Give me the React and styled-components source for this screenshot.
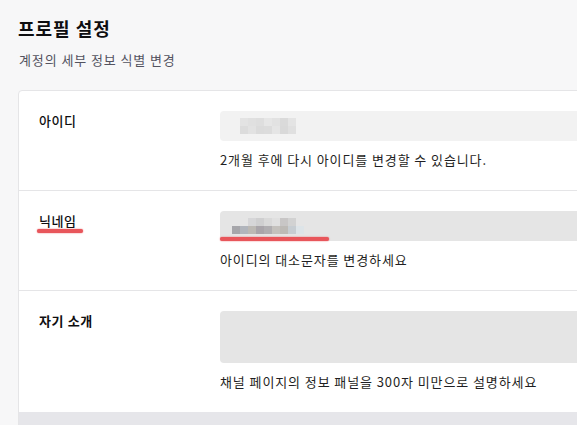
import React from 'react';
import styled, { createGlobalStyle } from 'styled-components';

const GlobalStyle = createGlobalStyle`
  html, body {
    margin: 0;
    padding: 0;
    background: #f7f7f8;
    overflow: hidden;
  }
  body {
    font-family: "Noto Sans CJK KR", "Noto Sans", sans-serif;
    color: #1f1f23;
  }
`;

const Page = styled.div`
  width: 680px;
  padding: 16px 0 0 18px;
  box-sizing: border-box;
`;

const Title = styled.h1`
  margin: 0;
  font-size: 18px;
  line-height: 24px;
  font-weight: 700;
  letter-spacing: 1px;
  color: #0e0e10;
`;

const Subtitle = styled.p`
  margin: 10px 0 20px 1px;
  font-size: 13px;
  line-height: 20px;
  letter-spacing: 0.9px;
  color: #53535f;
`;

const Card = styled.section`
  background: #fff;
  border: 1px solid #e5e5e7;
  border-radius: 4px;
  overflow: hidden;
`;

const Row = styled.div`
  display: grid;
  grid-template-columns: 181px 1fr;
  padding: 20px 0 20px 20px;
  border-top: ${p => (p.$first ? 'none' : '1px solid #e5e5e7')};
`;

const Label = styled.div`
  position: relative;
  align-self: start;
  font-size: 13px;
  line-height: 20px;
  letter-spacing: 0.6px;
  font-weight: ${p => p.$weight || 700};
  color: #0e0e10;
`;

const Field = styled.div`
  display: flex;
  flex-direction: column;
  gap: 9px;
`;

const InputBox = styled.div`
  position: relative;
  height: ${p => p.$h}px;
  background: ${p => p.$bg};
  border-radius: 4px;
  display: flex;
  align-items: center;
  padding-left: 12px;
`;

const Hint = styled.div`
  font-size: 13px;
  line-height: 20px;
  letter-spacing: 0.9px;
  color: #1f1f23;
`;

const Mosaic = styled.div`
  display: grid;
  grid-template-columns: repeat(9, 8px);
  grid-auto-rows: 8px;
  filter: blur(0.4px);
`;

const Cell = styled.div`
  background: ${p => p.$c};
`;

const Mark = styled.span`
  position: absolute;
  height: 4px;
  border-radius: 3px;
  background: #e8565b;
  box-shadow: 0 0 1.5px #e8565b;
  left: ${p => p.$left}px;
  top: ${p => p.$top}px;
  width: ${p => p.$w}px;
`;

const Footer = styled.div`
  height: 16px;
  background: #e6e6ea;
`;

const idCells = [
  '#f2f2f2', '#e3e3e3', '#e0e0e0', '#dedede', '#e6e6e6', '#e2e2e2', '#dadada', '#e4e4e4', '#f2f2f2',
  '#f2f2f2', '#dcdcdc', '#e2e2e2', '#dbdbdb', '#dcdcdc', '#e5e5e5', '#d9d9d9', '#e0e0e0', '#f2f2f2',
];

const nickCells = [
  '#e5e5e5', '#e5e5e5', '#d6d6d8', '#cfcfd0', '#d9d9d9', '#e0e0e0', '#c8c6c6', '#d2d2d2', '#e5e5e5',
  '#a6a6aa', '#b1b5bc', '#bcb9b4', '#a9a5aa', '#b0aeb1', '#c4c1bd', '#bdbab6', '#c7cdd2', '#dde4e8',
];

const Blurred = ({ cells }) => (
  <Mosaic>
    {cells.map((c, i) => (
      <Cell key={i} $c={c} />
    ))}
  </Mosaic>
);

export default function App() {
  return (
    <>
      <GlobalStyle />
      <Page>
        <Title>프로필 설정</Title>
        <Subtitle>계정의 세부 정보 식별 변경</Subtitle>
        <Card>
          <Row $first>
            <Label $weight={500}>아이디</Label>
            <Field>
              <InputBox $h={30} $bg="#f2f2f2">
                <Blurred cells={idCells} />
              </InputBox>
              <Hint>2개월 후에 다시 아이디를 변경할 수 있습니다.</Hint>
            </Field>
          </Row>
          <Row>
            <Label $weight={500}>
              닉네임
              <Mark $left={-2} $top={18} $w={46} />
            </Label>
            <Field>
              <InputBox $h={30} $bg="#e5e5e5">
                <Blurred cells={nickCells} />
                <Mark $left={0} $top={26} $w={109} />
              </InputBox>
              <Hint>아이디의 대소문자를 변경하세요</Hint>
            </Field>
          </Row>
          <Row>
            <Label>자기 소개</Label>
            <Field>
              <InputBox $h={52} $bg="#e5e5e5" />
              <Hint>채널 페이지의 정보 패널을 300자 미만으로 설명하세요</Hint>
            </Field>
          </Row>
          <Footer />
        </Card>
      </Page>
    </>
  );
}
